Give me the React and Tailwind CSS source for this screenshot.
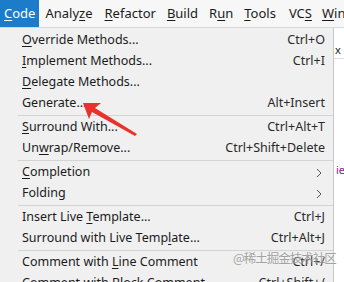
import React from "react";

const U = ({ children }) => <span className="underline underline-offset-2 decoration-1">{children}</span>;

function Row({ label, shortcut, sub }) {
  return (
    <div className="flex h-[21px] items-center pl-[22px] pr-[8px]">
      <div className="flex-1 whitespace-nowrap text-[#1b1b1b]">{label}</div>
      {shortcut && <div className="whitespace-nowrap text-[#2a2a2a]">{shortcut}</div>}
      {sub && (
        <svg width="8" height="12" viewBox="0 0 8 12" className="mr-[2px]">
          <path d="M2 2 L6 6 L2 10" fill="none" stroke="#555" strokeWidth="1" />
        </svg>
      )}
    </div>
  );
}

const Sep = () => (
  <div className="h-[3px] flex items-center pl-[18px]">
    <div className="h-px w-full bg-[#d4d4d4]" />
  </div>
);

export default function App() {
  return (
    <div
      className="relative w-[344px] h-[282px] overflow-hidden bg-white text-[12.5px]"
      style={{ fontFamily: '"Noto Sans", "Liberation Sans", sans-serif' }}
    >
      <div className="flex h-[28px] items-center bg-[#f7f7f7] border-b border-[#d9d9d9] text-[#1b1b1b] text-[13px]">
        <div className="h-full flex items-center bg-[#1c7cc9] text-white px-[4px] w-[40px]"><U>C</U>ode</div>
        <div className="ml-[6px]">Analy<U>z</U>e</div>
        <div className="ml-[12px]"><U>R</U>efactor</div>
        <div className="ml-[11px]"><U>B</U>uild</div>
        <div className="ml-[11px]">R<U>u</U>n</div>
        <div className="ml-[11px]"><U>T</U>ools</div>
        <div className="ml-[13px]">VC<U>S</U></div>
        <div className="ml-[10px] whitespace-nowrap"><U>W</U>indow</div>
      </div>
      <div className="flex">
        <div className="w-[334px] bg-[#f0f0f0] border-r border-[#c8c8c8] pt-[2px] h-[254px]">
          <Row label={<><U>O</U>verride Methods...</>} shortcut="Ctrl+O" />
          <Row label={<><U>I</U>mplement Methods...</>} shortcut="Ctrl+I" />
          <Row label={<><U>D</U>elegate Methods...</>} />
          <Row label="Generate..." shortcut="Alt+Insert" />
          <Sep />
          <Row label={<><U>S</U>urround With...</>} shortcut="Ctrl+Alt+T" />
          <Row label={<>Un<U>w</U>rap/Remove...</>} shortcut="Ctrl+Shift+Delete" />
          <Sep />
          <Row label={<><U>C</U>ompletion</>} sub />
          <Row label="Folding" sub />
          <Sep />
          <Row label={<>Insert Live <U>T</U>emplate...</>} shortcut="Ctrl+J" />
          <Row label={<>Surround with Live Temp<U>l</U>ate...</>} shortcut="Ctrl+Alt+J" />
          <Sep />
          <Row label={<>Comment with <U>L</U>ine Comment</>} shortcut="Ctrl+/" />
          <Row label={<>Comment with <U>B</U>lock Comment</>} shortcut="Ctrl+Shift+/" />
        </div>
        <div className="flex-1 relative">
          <div className="absolute left-[1px] top-[14px] text-[11px] text-[#222]">x</div>
          <div className="absolute left-0 right-0 top-[30px] h-px bg-[#dcdcdc]" />
          <div className="absolute left-[2px] top-[134px] text-[11px] text-[#7a1f8a]">ie</div>
        </div>
      </div>
      <svg className="absolute left-0 top-0" width="344" height="282" viewBox="0 0 344 282">
        <polygon points="83,103 101,103 95,108 137,134 135,136 92,112 89,119" fill="#e8322b" />
      </svg>
      <div
        className="absolute left-[233px] top-[249px] text-[12.5px] leading-[18px] tracking-[-1px] text-[#8f8f8f] opacity-80 whitespace-nowrap"
        style={{ fontFamily: '"Noto Sans CJK SC", sans-serif', textShadow: "0 0 2px #fff" }}
      >
        @稀土掘金技术社区
      </div>
    </div>
  );
}
